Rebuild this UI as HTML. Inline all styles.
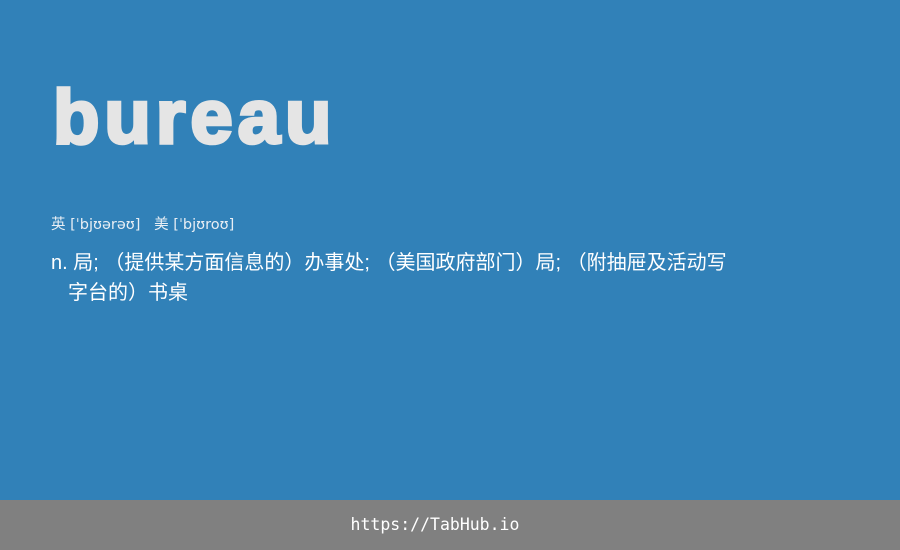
<!DOCTYPE html>
<html><head><meta charset="utf-8"><style>
body{margin:0;width:900px;height:550px;background:#3181b8;position:relative;overflow:hidden;font-family:"Liberation Sans","Noto Sans CJK SC",sans-serif;color:#fff}
h1{position:absolute;left:53px;top:68px;margin:0;font-size:76px;font-weight:bold;color:#e5e5e5;line-height:100px;letter-spacing:5px;-webkit-text-stroke:3.5px #e5e5e5}
.ph{position:absolute;left:51px;top:213px;color:#e8eef4;font-family:"DejaVu Sans","Noto Sans CJK SC",sans-serif;font-size:14.5px}
.def{position:absolute;left:51px;top:248px;width:665px;font-size:20px;line-height:30px;padding-left:17px;text-indent:-17px}
.ft{position:absolute;left:0;top:500px;width:870px;height:50px;background:#808080;color:#fff;font-family:"DejaVu Sans Mono",monospace;font-size:16.5px;text-align:center;line-height:50px;padding-right:30px}
</style></head><body>
<h1>bureau</h1>
<div class="ph">英 [ˈbjʊərəʊ]&nbsp;&nbsp;&nbsp;美 [ˈbjʊroʊ]</div>
<div class="def">n. 局; （提供某方面信息的）办事处; （美国政府部门）局; （附抽屉及活动写字台的）书桌</div>
<div class="ft">https://TabHub.io</div>
</body></html>
